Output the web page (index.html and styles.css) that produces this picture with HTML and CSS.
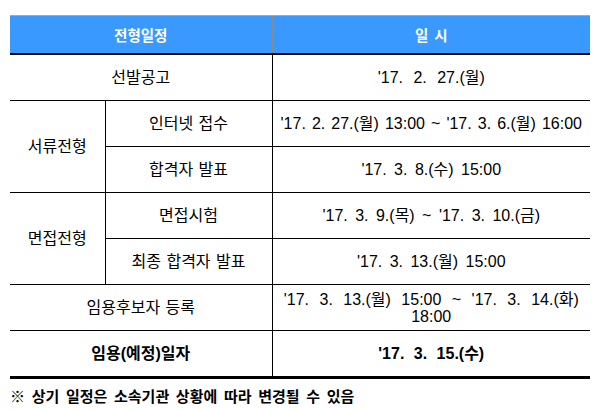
FILE: index.html
```html
<!DOCTYPE html>
<html lang="ko">
<head>
<meta charset="utf-8">
<link rel="stylesheet" href="styles.css">
</head>
<body>
<div class="wrap">
<table class="sched">
  <colgroup>
    <col class="c1"><col class="c2"><col class="c3">
  </colgroup>
  <thead>
    <tr><th colspan="2">전형일정</th><th>일 시</th></tr>
  </thead>
  <tbody>
    <tr><td colspan="2">선발공고</td><td class="d ws6">'17. 2. 27.(월)</td></tr>
    <tr><td rowspan="2">서류전형</td><td>인터넷 접수</td><td class="d ws2">'17. 2. 27.(월) 13:00 ~ '17. 3. 6.(월) 16:00</td></tr>
    <tr><td>합격자 발표</td><td class="d">'17. 3. 8.(수) 15:00</td></tr>
    <tr><td rowspan="2">면접전형</td><td>면접시험</td><td class="d">'17. 3. 9.(목) ~ '17. 3. 10.(금)</td></tr>
    <tr><td>최종 합격자 발표</td><td class="d">'17. 3. 13.(월) 15:00</td></tr>
    <tr><td colspan="2">임용후보자 등록</td><td class="d ws6 two">'17. 3. 13.(월) 15:00 ~ '17. 3. 14.(화)<br>18:00</td></tr>
    <tr class="final"><td colspan="2">임용(예정)일자</td><td class="d ws5">'17. 3. 15.(수)</td></tr>
  </tbody>
</table>
<p class="note">※ 상기 일정은 소속기관 상황에 따라 변경될 수 있음</p>
</div>
</body>
</html>
```
FILE: styles.css
```css
html, body {
  margin: 0;
  padding: 0;
  background: #fff;
}
.wrap {
  padding: 15px 0 0 10px;
  font-family: "Liberation Sans", "Noto Sans CJK KR", sans-serif;
  color: #000;
}
.sched {
  border-collapse: collapse;
  width: 580px;
  table-layout: fixed;
  font-size: 16px;
}
.c1 { width: 95px; }
.c2 { width: 167px; }
.c3 { width: 318px; }
.sched th {
  background: #3999ff;
  color: #fff;
  font-weight: bold;
  font-size: 14.5px;
  word-spacing: 2px;
  height: 37px;
  padding: 0;
  border-top: 1px solid #a9a9a9;
  border-bottom: 2px solid #000;
  border-left: 1px solid #8a8a8a;
}
.sched th:first-child { border-left: none; }
.sched td {
  text-align: center;
  vertical-align: middle;
  height: 45px;
  padding: 0;
  border: 1px solid #000;
  line-height: 16px;
  word-spacing: 1px;
}
.sched tr td:first-child { border-left: none; }
.sched tr td:last-child { border-right: none; }
.sched td[rowspan] { border-right: 1px solid #000; }
.sched td.d { word-spacing: 3px; }
.sched td.ws2 { word-spacing: 1.6px; }
.sched td.ws5 { word-spacing: 5px; }
.sched td.ws6 { word-spacing: 6px; }
.sched .final td {
  font-weight: bold;
  border-bottom: 3px solid #000;
}
.sched td.two { line-height: 17px; }
.note {
  margin: 6px 0 0 0;
  font-size: 15px;
  font-weight: bold;
  word-spacing: 2.5px;
}
```
